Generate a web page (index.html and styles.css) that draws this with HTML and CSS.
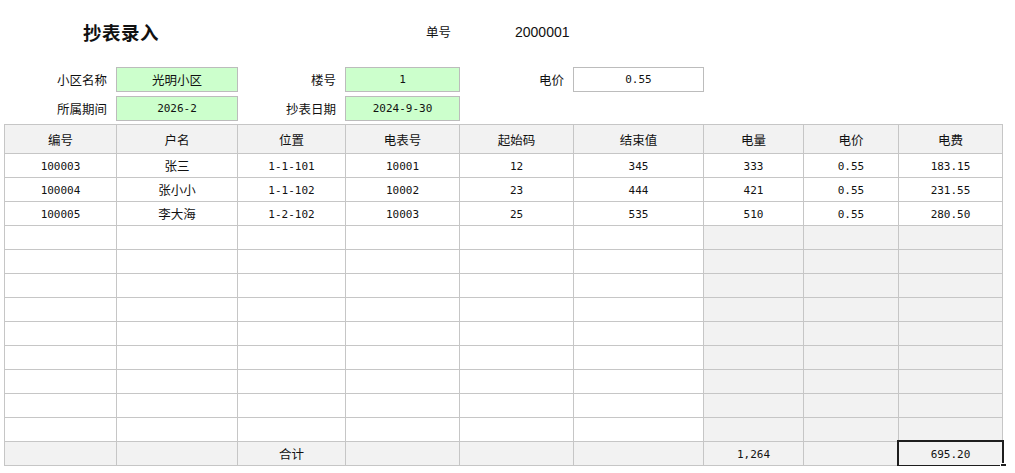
FILE: index.html
```html
<!DOCTYPE html>
<html lang="zh">
<head>
<meta charset="utf-8">
<title>抄表录入</title>
<link rel="stylesheet" href="styles.css">
</head>
<body>
<div class="page">
  <div class="top">
    <div class="title">抄表录入</div>
    <div class="lbl c4">单号</div>
    <div class="no-val">2000001</div>

    <div class="lbl">小区名称</div>
    <div class="box cn">光明小区</div>
    <div class="lbl">楼号</div>
    <div class="box num">1</div>
    <div class="lbl">电价</div>
    <div class="box plain num">0.55</div>

    <div class="lbl">所属期间</div>
    <div class="box num">2026-2</div>
    <div class="lbl">抄表日期</div>
    <div class="box num">2024-9-30</div>
  </div>

  <div class="sheet">
    <div class="c hd">编号</div><div class="c hd">户名</div><div class="c hd">位置</div><div class="c hd">电表号</div><div class="c hd">起始码</div><div class="c hd">结束值</div><div class="c hd">电量</div><div class="c hd">电价</div><div class="c hd">电费</div>

    <div class="c">100003</div><div class="c cn">张三</div><div class="c">1-1-101</div><div class="c">10001</div><div class="c">12</div><div class="c">345</div><div class="c">333</div><div class="c">0.55</div><div class="c">183.15</div>
    <div class="c">100004</div><div class="c cn">张小小</div><div class="c">1-1-102</div><div class="c">10002</div><div class="c">23</div><div class="c">444</div><div class="c">421</div><div class="c">0.55</div><div class="c">231.55</div>
    <div class="c">100005</div><div class="c cn">李大海</div><div class="c">1-2-102</div><div class="c">10003</div><div class="c">25</div><div class="c">535</div><div class="c">510</div><div class="c">0.55</div><div class="c">280.50</div>

    <div class="c"></div><div class="c"></div><div class="c"></div><div class="c"></div><div class="c"></div><div class="c"></div><div class="c sh"></div><div class="c sh"></div><div class="c sh"></div>
    <div class="c"></div><div class="c"></div><div class="c"></div><div class="c"></div><div class="c"></div><div class="c"></div><div class="c sh"></div><div class="c sh"></div><div class="c sh"></div>
    <div class="c"></div><div class="c"></div><div class="c"></div><div class="c"></div><div class="c"></div><div class="c"></div><div class="c sh"></div><div class="c sh"></div><div class="c sh"></div>
    <div class="c"></div><div class="c"></div><div class="c"></div><div class="c"></div><div class="c"></div><div class="c"></div><div class="c sh"></div><div class="c sh"></div><div class="c sh"></div>
    <div class="c"></div><div class="c"></div><div class="c"></div><div class="c"></div><div class="c"></div><div class="c"></div><div class="c sh"></div><div class="c sh"></div><div class="c sh"></div>
    <div class="c"></div><div class="c"></div><div class="c"></div><div class="c"></div><div class="c"></div><div class="c"></div><div class="c sh"></div><div class="c sh"></div><div class="c sh"></div>
    <div class="c"></div><div class="c"></div><div class="c"></div><div class="c"></div><div class="c"></div><div class="c"></div><div class="c sh"></div><div class="c sh"></div><div class="c sh"></div>
    <div class="c"></div><div class="c"></div><div class="c"></div><div class="c"></div><div class="c"></div><div class="c"></div><div class="c sh"></div><div class="c sh"></div><div class="c sh"></div>
    <div class="c"></div><div class="c"></div><div class="c"></div><div class="c"></div><div class="c"></div><div class="c"></div><div class="c sh"></div><div class="c sh"></div><div class="c sh"></div>

    <div class="c sh"></div><div class="c sh"></div><div class="c sh cn">合计</div><div class="c sh"></div><div class="c sh"></div><div class="c sh"></div><div class="c sh">1,264</div><div class="c sh"></div><div class="c sh sel">695.20<span class="sel-frame"><span class="sel-handle"></span></span></div>
  </div>
</div>
</body>
</html>
```

FILE: styles.css
```css
html, body {
  margin: 0;
  padding: 0;
  background: #ffffff;
}

body {
  font-family: "Noto Sans CJK SC", sans-serif;
  color: #111;
}

.page {
  padding-left: 4px;
}

/* ---------- top form ---------- */
.top {
  display: grid;
  grid-template-columns: 112px 122px 107px 115px 113px 131px;
  grid-template-rows: 63px 25px 25px;
  row-gap: 4px;
  font-size: 12.5px;
}

.title {
  grid-column: 1 / span 2;
  align-self: center;
  text-align: center;
  font-size: 18.5px;
  font-weight: 700;
  letter-spacing: 0.5px;
  padding-top: 1px;
}

.lbl {
  display: flex;
  align-items: center;
  justify-content: flex-end;
  padding-right: 9px;
  font-size: 12.5px;
}

.c4 {
  grid-column: 4;
}

.no-val {
  grid-column: 5 / span 2;
  display: flex;
  align-items: center;
  padding-left: 55px;
  font-family: "Liberation Sans", sans-serif;
  font-size: 14px;
}

.box {
  box-sizing: border-box;
  background: #ccffcc;
  border: 1px solid #bcbcbc;
  display: flex;
  align-items: center;
  justify-content: center;
}

.box.plain {
  background: #ffffff;
}

.num {
  font-family: "DejaVu Sans Mono", monospace;
  font-size: 11px;
}

.cn {
  font-family: "Noto Sans CJK SC", sans-serif;
  font-size: 12.5px;
}

/* ---------- sheet ---------- */
.sheet {
  margin-top: 3px;
  display: grid;
  grid-template-columns: 111px 120px 107px 113px 113px 129px 99px 94px 103px;
  grid-template-rows: 28px;
  grid-auto-rows: 23px;
  gap: 1px;
  width: max-content;
  background: #c6c6c6;
  border: 1px solid #c6c6c6;
}

.c {
  background: #ffffff;
  display: flex;
  align-items: center;
  justify-content: center;
  font-family: "DejaVu Sans Mono", monospace;
  font-size: 11px;
  padding-top: 1px;
  box-sizing: border-box;
}

.c.cn {
  font-family: "Noto Sans CJK SC", sans-serif;
  font-size: 12.5px;
  padding-top: 0;
}

.c.hd {
  background: #f2f2f2;
  font-family: "Noto Sans CJK SC", sans-serif;
  font-size: 12.5px;
  padding-top: 0;
}

.c.sh {
  background: #f2f2f2;
}

.sel {
  position: relative;
}

.sel-frame {
  position: absolute;
  top: -2px;
  left: -2px;
  right: -2px;
  bottom: -2px;
  border: 2px solid #1e1e1e;
}

.sel-handle {
  position: absolute;
  right: -5px;
  bottom: -5px;
  width: 5px;
  height: 5px;
  background: #1e1e1e;
  border: 1px solid #ffffff;
}
```
